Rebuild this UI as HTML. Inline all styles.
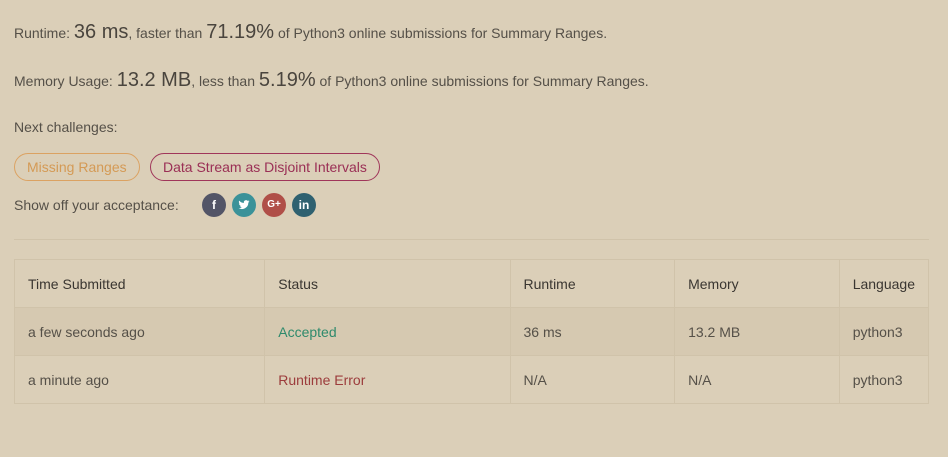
<!DOCTYPE html>
<html><head><meta charset="utf-8"><style>
body{margin:0;background:#dbcfb8;font-family:"Liberation Sans",sans-serif;color:#555048;font-size:14px;width:948px;height:457px;overflow:hidden;position:relative}
.a{position:absolute;left:14px;white-space:nowrap}
.big{font-size:20px;color:#4a453e}
.btn{position:absolute;top:153px;height:26px;border-radius:14px;font-size:14px;line-height:26px;padding:0 12px;box-sizing:content-box}
.ic{position:absolute;top:193px;width:24px;height:24px;border-radius:50%;color:#fff;font-weight:bold;font-size:12px;text-align:center;line-height:24px}
table{position:absolute;left:14px;top:259px;border-collapse:collapse;width:915px}
td{border:1px solid #d0c3aa;height:47px;padding:0 13px;font-size:14px}
tr.h td{color:#3a3631}
tr.r1 td{background:#d6c9b1}
</style></head><body>
<div class="a" style="top:21px">Runtime: <span class="big">36 ms</span>, faster than <span class="big">71.19%</span> of Python3 online submissions for Summary Ranges.</div>
<div class="a" style="top:69px">Memory Usage: <span class="big">13.2 MB</span>, less than <span class="big">5.19%</span> of Python3 online submissions for Summary Ranges.</div>
<div class="a" style="top:119px">Next challenges:</div>
<div class="btn" style="left:14px;border:1px solid #dba262;color:#d49a55">Missing Ranges</div>
<div class="btn" style="left:150px;border:1px solid #a0365a;color:#9a2f55">Data Stream as Disjoint Intervals</div>
<div class="a" style="top:197px">Show off your acceptance:</div>
<div class="ic" style="left:202px;background:#535567">f</div>
<div class="ic" style="left:232px;background:#3b9299"><svg width="12" height="12" viewBox="0 0 24 24" style="margin-top:6px"><path fill="#fff" d="M23 4.5a9 9 0 0 1-2.6.7 4.5 4.5 0 0 0 2-2.5 9 9 0 0 1-2.9 1.1 4.5 4.5 0 0 0-7.7 4.1A12.8 12.8 0 0 1 2.5 3.2a4.5 4.5 0 0 0 1.4 6 4.5 4.5 0 0 1-2-.6 4.5 4.5 0 0 0 3.6 4.4 4.5 4.5 0 0 1-2 .1 4.5 4.5 0 0 0 4.2 3.1A9 9 0 0 1 1 18.1 12.8 12.8 0 0 0 20.7 7.3 9 9 0 0 0 23 4.5z"/></svg></div>
<div class="ic" style="left:262px;background:#b04f48;font-size:10px">G+</div>
<div class="ic" style="left:292px;background:#2f6170">in</div>
<div style="position:absolute;left:14px;top:239px;width:915px;height:1px;background:#d0c3aa"></div>
<table>
<tr class="h"><td style="width:224px">Time Submitted</td><td style="width:219px">Status</td><td style="width:138px">Runtime</td><td style="width:138px">Memory</td><td>Language</td></tr>
<tr class="r1"><td>a few seconds ago</td><td style="color:#2e8a6c">Accepted</td><td>36 ms</td><td>13.2 MB</td><td>python3</td></tr>
<tr><td>a minute ago</td><td style="color:#9c3c3c">Runtime Error</td><td>N/A</td><td>N/A</td><td>python3</td></tr>
</table>
</body></html>
